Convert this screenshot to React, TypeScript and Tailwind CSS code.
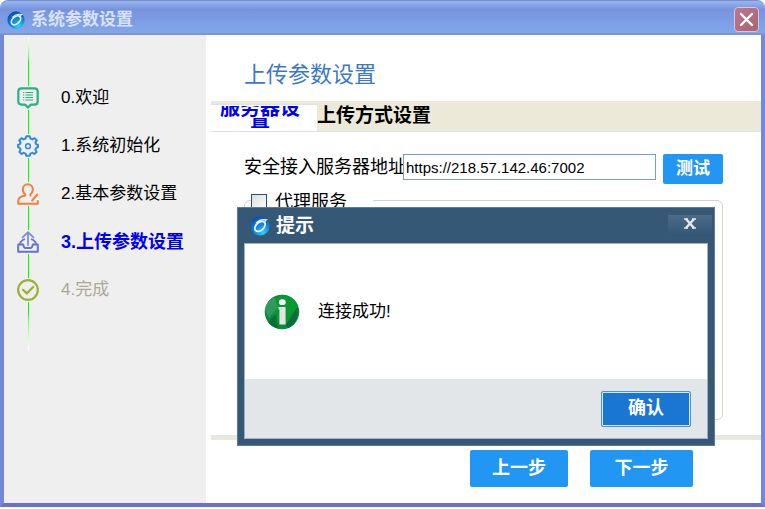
import type { ReactNode } from "react";

interface Step {
	label: string;
	icon: ReactNode;
	state: "done" | "active" | "pending";
}

const steps: Step[] = [
	{ label: "0.欢迎", icon: <WelcomeIcon />, state: "done" },
	{ label: "1.系统初始化", icon: <GearIcon />, state: "done" },
	{ label: "2.基本参数设置", icon: <UserEditIcon />, state: "done" },
	{ label: "3.上传参数设置", icon: <UploadIcon />, state: "active" },
	{ label: "4.完成", icon: <FinishIcon />, state: "pending" },
];

const stepText = {
	done: "text-[17px] text-black",
	active: "text-[18px] font-bold text-[#0000f5]",
	pending: "text-[17px] text-[#aca899]",
};

function AppLogo({ className }: { className?: string }) {
	return (
		<svg className={className} viewBox="0 0 20 20" fill="none">
			<defs>
				<radialGradient id="logo" cx="0.65" cy="0.85" r="0.85">
					<stop offset="0" stopColor="#2fd0fb" />
					<stop offset="0.5" stopColor="#1287e0" />
					<stop offset="1" stopColor="#0b4fb0" />
				</radialGradient>
			</defs>
			<circle cx="10" cy="10" r="9.6" fill="url(#logo)" />
			<ellipse
				cx="10"
				cy="10.4"
				rx="6"
				ry="3.9"
				transform="rotate(-42 10 10.4)"
				stroke="#eaf7ff"
				strokeWidth="1.8"
			/>
			<path
				d="M6.2 6.8C9.4 3.6 13 3.2 16.4 3.8C15.2 4.6 14.8 5.4 14.6 6.6"
				stroke="#eaf7ff"
				strokeWidth="1.2"
				strokeLinecap="round"
			/>
		</svg>
	);
}

function WelcomeIcon() {
	return (
		<svg width="22" height="22" viewBox="0 0 22 22" fill="none" stroke="#25b47e">
			<path
				d="M4.5 1.3H17.5Q20.7 1.3 20.7 4.5V14.4Q20.7 17.6 17.5 17.6H14L11 20.4L8 17.6H4.5Q1.3 17.6 1.3 14.4V4.5Q1.3 1.3 4.5 1.3Z"
				strokeWidth="2.2"
				strokeLinejoin="round"
			/>
			<path d="M8.5 5.5H16M8.5 8H16M8.5 10.5H16M8.5 13H16" strokeWidth="1.2" />
			<path d="M6 5.5H7.3M6 8H7.3M6 10.5H7.3M6 13H7.3" strokeWidth="1.2" />
		</svg>
	);
}

function GearIcon() {
	return (
		<svg width="22" height="22" viewBox="0 0 22 22" fill="none" stroke="#2f8bd6">
			<path
				d="M9.4 1.2H12.6L13.4 3.5L15.5 4.4L17.6 3.2L19.8 5.4L18.4 7.6L19.2 9.4L20.9 9.8V12.4L19.2 12.9L18.4 14.7L19.6 16.9L17.4 19L15.3 17.8L13.4 18.6L12.6 20.8H9.4L8.6 18.6L6.7 17.8L4.6 19L2.4 16.9L3.6 14.7L2.8 12.9L1.1 12.4V9.8L2.8 9.4L3.6 7.6L2.2 5.4L4.4 3.2L6.5 4.4L8.6 3.5Z"
				strokeWidth="2"
				strokeLinejoin="round"
			/>
			<circle cx="11" cy="11.2" r="2.4" strokeWidth="1.5" />
		</svg>
	);
}

function UserEditIcon() {
	return (
		<svg width="22" height="22" viewBox="0 0 22 22" fill="none" stroke="#f0803c">
			<path
				d="M8.2 11.3C6.6 10.2 5.8 8.3 5.8 6.3C5.8 3.2 8 1.2 10.8 1.2C13.6 1.2 15.8 3.2 15.8 6.3C15.8 8.3 15 10.2 13.4 11.3M8.2 11.3V12.6C4.2 13.2 1.2 15.5 1.2 18.6V20.8H20.8V18M13.4 11.3V12.6"
				strokeWidth="2"
				strokeLinecap="round"
				strokeLinejoin="round"
			/>
			<path d="M15.2 17.5L20.2 11.6" strokeWidth="2" strokeLinecap="round" />
		</svg>
	);
}

function UploadIcon() {
	return (
		<svg width="22" height="22" viewBox="0 0 22 22" fill="none" stroke="#6675c4">
			<path
				d="M5.6 6.4L11 1.2L16.4 6.4M11 2V14"
				strokeWidth="1.8"
				strokeLinecap="round"
				strokeLinejoin="round"
				stroke="#7c8cdc"
			/>
			<path
				d="M8 8.2C5.2 8.8 3.6 10.4 2.6 13.4M14 8.2C16.8 8.8 18.4 10.4 19.4 13.4"
				strokeWidth="1.7"
			/>
			<path
				d="M1.2 13.6H6.2Q6.8 17 8.6 17H13.4Q15.2 17 15.8 13.6H20.8V20.8H1.2Z"
				strokeWidth="2"
				strokeLinejoin="round"
			/>
		</svg>
	);
}

function FinishIcon() {
	return (
		<svg width="22" height="22" viewBox="0 0 22 22" fill="none" stroke="#9bb135">
			<circle cx="11" cy="11" r="9.8" strokeWidth="2.2" />
			<path
				d="M6 10.8L9.8 14.4L16.2 8"
				strokeWidth="2.2"
				strokeLinecap="round"
				strokeLinejoin="round"
			/>
		</svg>
	);
}

function InfoIcon() {
	return (
		<svg className="size-9 shrink-0" viewBox="0 0 36 36">
			<circle cx="18" cy="18" r="17.3" fill="#0a8a3c" />
			<path d="M18 .7A17.3 17.3 0 0 1 34 11.5L22 30L11 31L6 8Z" fill="#079a33" />
			<path d="M1 16A17.3 17.3 0 0 1 10 3L14 13L5 24Z" fill="#2f9a5c" />
			<path d="M22 31L33 14A17.3 17.3 0 0 1 24 34.2Z" fill="#0a6b3c" />
			<path d="M4 28L12 20L14 34.5A17.3 17.3 0 0 1 4 28Z" fill="#08703a" />
			<ellipse cx="18.3" cy="8.2" rx="3.4" ry="2.9" fill="#fff" />
			<path d="M14.5 13H21.6V30.5H15.4V15.5H14.5Z" fill="#e3e3e3" />
		</svg>
	);
}

function TitleBar() {
	return (
		<header className="flex h-[35px] shrink-0 items-center justify-between rounded-t-lg border-t border-[#7a8fc6] bg-linear-to-b from-[#98b6f0] via-[#7893de] via-25% to-[#83a9ea] pt-[3px] pl-[7px] pr-[6px] shadow-[inset_0_-2px_0_#7c93df]">
			<div className="flex items-center gap-[6px]">
				<AppLogo className="size-[18px]" />
				<h1 className="text-[17px] leading-6 font-bold text-[#d9e2fa]">系统参数设置</h1>
			</div>
			<button
				aria-label="关闭"
				className="flex size-[25px] items-center justify-center rounded border border-[#d3c6e4] bg-linear-to-br from-[#bd7690] to-[#a9646f]"
			>
				<svg width="15" height="15" viewBox="0 0 15 15" fill="none">
					<path
						d="M2 2L13 13M13 2L2 13"
						stroke="#fff"
						strokeWidth="2.4"
						strokeLinecap="round"
					/>
				</svg>
			</button>
		</header>
	);
}

function Sidebar() {
	return (
		<nav className="w-[202px] shrink-0 bg-[#efefef] pt-[2px] pl-[13px]">
			<div className="ml-[11px] h-[37px] w-px bg-linear-to-b from-white to-[#00ff00] to-65%" />
			<ol>
				{steps.map((step) => (
					<li key={step.label} className="flex h-12 items-center gap-[22px]">
						<div className="flex h-full w-[22px] flex-col gap-px">
							<span className="ml-[11px] w-px flex-1 bg-[#00ff00]" />
							{step.icon}
							<span className="ml-[11px] w-px flex-1 bg-[#00ff00]" />
						</div>
						<span className={stepText[step.state]}>{step.label}</span>
					</li>
				))}
			</ol>
			<div className="ml-[11px] h-9 w-px bg-linear-to-b from-[#00ff00] to-white" />
		</nav>
	);
}

function Tabs() {
	return (
		<div
			role="tablist"
			className="flex h-[31px] shrink-0 border-b border-[#dbe3ea] bg-[#ece9d8] pt-[3px]"
		>
			<button
				role="tab"
				aria-selected="true"
				className="w-[106px] overflow-hidden border-t border-[#dbe3ea] bg-white pr-2 text-[20px] leading-5 font-bold text-[#0000f5]"
			>
				<span className="flex h-3 items-end justify-center overflow-hidden">服务器设</span>
				<span className="flex h-3 items-end justify-center overflow-hidden">置</span>
			</button>
			<button
				role="tab"
				aria-selected="false"
				className="pb-1 text-[19px] leading-6 font-bold text-black"
			>
				上传方式设置
			</button>
		</div>
	);
}

function ServerForm() {
	return (
		<div className="flex flex-1 flex-col pt-[22px] pr-[38px] pb-[15px] pl-[33px]">
			<div className="flex items-start">
				<label htmlFor="server" className="w-[159px] shrink-0 text-[18px] leading-[26px] whitespace-nowrap">
					安全接入服务器地址
				</label>
				<input
					id="server"
					type="text"
					defaultValue="https://218.57.142.46:7002"
					className="relative h-[26px] min-w-0 flex-1 border border-[#7f9db9] bg-white pl-[2px] text-[15px] outline-none"
				/>
				<button className="ml-[7px] h-[30px] w-[60px] rounded-xs bg-[#2196f3] text-[17px] font-bold text-white">
					测试
				</button>
			</div>
			<fieldset className="mt-1 flex-1 rounded-md border border-[#d5d5c6]">
				<legend className="ml-[6px] w-[122px]">
					<label className="flex h-6 items-center gap-2 pt-1 text-[18px] leading-5">
						<input
							type="checkbox"
							className="size-4 appearance-none border border-[#1d5281] bg-linear-to-br from-[#dcdcd7] to-white"
						/>
						代理服务
					</label>
				</legend>
			</fieldset>
		</div>
	);
}

function MessageDialog() {
	return (
		<div
			role="dialog"
			aria-labelledby="dialog-title"
			className="absolute top-[207px] right-[50px] left-[237px] border border-[#5d7b95] bg-[#355876] px-[6px] pb-[6px]"
		>
			<div className="flex h-[35px] items-center justify-between pl-[6px]">
				<div className="flex items-center gap-[6px]">
					<AppLogo className="size-5" />
					<h2 id="dialog-title" className="text-[19px] leading-6 font-bold text-white">
						提示
					</h2>
				</div>
				<button
					aria-label="关闭"
					className="-mr-1 mb-1 flex h-[18px] w-11 items-center justify-center bg-linear-to-b from-[#4c6b87] to-[#375a78]"
				>
					<svg width="12" height="11" viewBox="0 0 12 11" fill="none">
						<path d="M2 1L10 10M10 1L2 10" stroke="#e4e8ec" strokeWidth="2.4" />
						<path d="M0 1H4M8 1H12M0 10H4M8 10H12" stroke="#e4e8ec" strokeWidth="1.4" />
					</svg>
				</button>
			</div>
			<div className="border border-[#a3b2c0] bg-white">
				<div className="flex h-[135px] items-center gap-[18px] pl-[19px] text-[17px]">
					<InfoIcon />
					<p>连接成功!</p>
				</div>
				<div className="flex h-[59px] items-center justify-end bg-[#e2e6e9] pr-4">
					<button className="h-9 w-[90px] rounded-xs border border-[#4d93dc] bg-[#1976d2] text-[18px] font-bold text-white shadow-[inset_0_0_0_1px_#d5e8fb]">
						确认
					</button>
				</div>
			</div>
		</div>
	);
}

export default function App() {
	return (
		<div className="relative flex min-h-screen flex-col bg-white pb-[2px] font-['Liberation_Sans','Noto_Sans_CJK_SC',sans-serif] text-black">
			<TitleBar />
			<div className="flex flex-1 border-x-4 border-b-4 border-x-[#7488da] border-b-[#6a70cc]">
				<Sidebar />
				<main className="flex min-w-0 flex-1 flex-col bg-white pl-[5px]">
					<h2 className="flex h-[66px] shrink-0 items-center pt-3 pl-[33px] text-[22px] text-[#3c78c8]">
						上传参数设置
					</h2>
					<Tabs />
					<ServerForm />
					<footer className="flex h-[68px] shrink-0 items-start justify-end gap-[22px] border-t-2 border-[#dfe5e8] pr-[68px] shadow-[inset_0_3px_0_#ece9d8]">
						<button className="mt-[13px] h-[37px] w-[98px] rounded-xs bg-[#2196f3] text-[18px] font-bold text-white">
							上一步
						</button>
						<button className="mt-[13px] h-[37px] w-[103px] rounded-xs bg-[#2196f3] text-[18px] font-bold text-white">
							下一步
						</button>
					</footer>
				</main>
			</div>
			<MessageDialog />
		</div>
	);
}
